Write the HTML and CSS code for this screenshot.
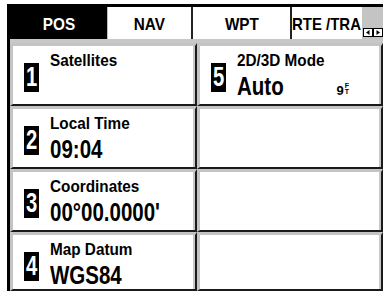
FILE: index.html
```html
<!DOCTYPE html>
<html>
<head>
<meta charset="utf-8">
<link rel="stylesheet" href="styles.css">
</head>
<body>
<div class="screen">
  <div class="tabs">
    <div class="tab active"><span>POS</span></div>
    <div class="tab nav"><span>NAV</span></div>
    <div class="tab wpt"><span>WPT</span></div>
    <div class="tab rte"><span>RTE /TRA</span></div>
    <div class="scroll">
      <svg class="arrows" width="20" height="9" viewBox="0 0 20 9"><rect x="0.5" y="0.5" width="9" height="8" fill="#fff" stroke="#000"/><path d="M6.5 2 L3 4.5 L6.5 7 Z" fill="#000"/><rect x="10.5" y="0.5" width="9" height="8" fill="#fff" stroke="#000"/><path d="M13.5 2 L17 4.5 L13.5 7 Z" fill="#000"/></svg>
    </div>
  </div>
  <div class="grid">
    <div class="cell">
      <div class="badge"><span>1</span></div>
      <div class="text"><div class="label"><span>Satellites</span></div><div class="value"></div></div>
    </div>
    <div class="cell">
      <div class="badge"><span>5</span></div>
      <div class="text"><div class="label"><span>2D/3D Mode</span></div><div class="value"><span>Auto</span></div></div>
      <div class="unit"><span class="nine">9</span><span class="ft"><span>F</span><span>T</span></span></div>
    </div>
    <div class="cell">
      <div class="badge"><span>2</span></div>
      <div class="text"><div class="label"><span>Local Time</span></div><div class="value"><span>09:04</span></div></div>
    </div>
    <div class="cell"></div>
    <div class="cell">
      <div class="badge"><span>3</span></div>
      <div class="text"><div class="label"><span>Coordinates</span></div><div class="value"><span>00°00.0000'</span></div></div>
    </div>
    <div class="cell"></div>
    <div class="cell">
      <div class="badge"><span>4</span></div>
      <div class="text"><div class="label"><span>Map Datum</span></div><div class="value"><span>WGS84</span></div></div>
    </div>
    <div class="cell"></div>
  </div>
</div>
</body>
</html>
```
FILE: styles.css
```css
body {
  margin: 0;
  background: #fff;
  font-family: "Liberation Sans", Arial, sans-serif;
  font-weight: bold;
  color: #000;
}
.screen {
  margin: 4px 0 0 7px;
  width: 373px;
  border-top: 3px solid #000;
  border-left: 3px solid #000;
}
.tabs {
  display: flex;
  height: 32px;
  border-bottom: 4px solid #c8c8c8;
}
.tab {
  box-sizing: border-box;
  height: 32px;
  padding-top: 8px;
  font-size: 17px;
  line-height: 20px;
  text-align: center;
  background: #fff;
  white-space: nowrap;
  overflow: hidden;
}
.tab span {
  display: inline-block;
  transform: scaleX(.9);
}
.tab.active {
  width: 97px;
  background: #000;
  color: #fff;
}
.tab.nav {
  width: 86px;
  border-left: 1px solid #c0c0c0;
  border-right: 2px solid #222;
}
.tab.wpt {
  width: 99px;
  border-right: 2px solid #222;
}
.tab.rte {
  width: 70px;
  text-align: left;
}
.tab.rte span {
  transform-origin: 0 50%;
  transform: scaleX(.88);
}
.scroll {
  flex: 1;
  background: #c4c4c4;
  display: flex;
  align-items: flex-end;
  padding: 0 0 2px 1px;
}
.arrows { display: block; }
.grid {
  display: grid;
  grid-template-columns: 187px 186px;
  grid-template-rows: 63px 63px 63px 59px;
}
.cell {
  box-sizing: border-box;
  border-top: 3px solid #c4c4c4;
  border-left: 3px solid #c4c4c4;
  border-right: 2px solid #1a1a1a;
  border-bottom: 2px solid #1a1a1a;
  box-shadow: inset -2px 0 0 #c8c8c8;
  display: flex;
  align-items: flex-start;
  padding: 5px 0 0 11px;
  position: relative;
}
.badge {
  width: 15px;
  height: 29px;
  margin-top: 12px;
  background: #000;
  color: #fff;
  font-size: 27px;
  line-height: 29px;
  text-align: center;
  flex: none;
  overflow: hidden;
}
.badge span {
  display: inline-block;
  transform: scaleX(.75);
}
.text {
  margin-left: 11px;
  white-space: nowrap;
}
.label {
  font-size: 17px;
  line-height: 20px;
  height: 20px;
}
.label span {
  display: inline-block;
  transform-origin: 0 50%;
  transform: scaleX(.9);
}
.value {
  font-size: 25px;
  line-height: 30px;
  height: 30px;
}
.value span {
  display: inline-block;
  transform-origin: 0 50%;
  transform: scaleX(.82);
}
.unit {
  position: absolute;
  right: 32px;
  top: 37px;
  display: flex;
  align-items: flex-end;
}
.nine {
  font-size: 13px;
  line-height: 13px;
}
.ft {
  display: flex;
  flex-direction: column;
  font-size: 7px;
  line-height: 6px;
  margin-left: 1px;
  margin-bottom: 2px;
}
```
